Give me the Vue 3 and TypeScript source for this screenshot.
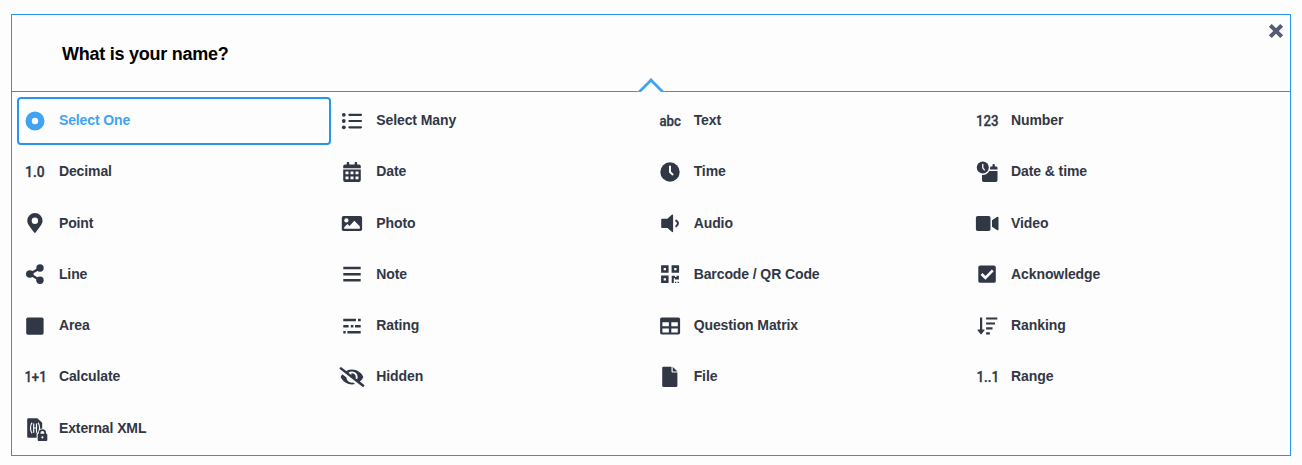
<script setup lang="ts">
interface QuestionType {
  id: string
  label: string
  glyph?: { text: string; x: number; width: number }
}

const question = 'What is your name?'
const selected = 'select_one'

const types: QuestionType[] = [
  { id: 'select_one', label: 'Select One' },
  { id: 'select_many', label: 'Select Many' },
  { id: 'text', label: 'Text', glyph: { text: 'abc', x: 4.4, width: 21.4 } },
  { id: 'number', label: 'Number', glyph: { text: '123', x: 3.9, width: 22.6 } },
  { id: 'decimal', label: 'Decimal', glyph: { text: '1.0', x: 5, width: 19.6 } },
  { id: 'date', label: 'Date' },
  { id: 'time', label: 'Time' },
  { id: 'datetime', label: 'Date & time' },
  { id: 'point', label: 'Point' },
  { id: 'photo', label: 'Photo' },
  { id: 'audio', label: 'Audio' },
  { id: 'video', label: 'Video' },
  { id: 'line', label: 'Line' },
  { id: 'note', label: 'Note' },
  { id: 'barcode', label: 'Barcode / QR Code' },
  { id: 'acknowledge', label: 'Acknowledge' },
  { id: 'area', label: 'Area' },
  { id: 'rating', label: 'Rating' },
  { id: 'matrix', label: 'Question Matrix' },
  { id: 'ranking', label: 'Ranking' },
  { id: 'calculate', label: 'Calculate', glyph: { text: '1+1', x: 4.4, width: 22.2 } },
  { id: 'hidden', label: 'Hidden' },
  { id: 'file', label: 'File' },
  { id: 'range', label: 'Range', glyph: { text: '1..1', x: 4.4, width: 22.8 } },
  { id: 'xml', label: 'External XML' },
]
</script>

<template>
  <section class="panel">
    <header class="head">
      <h1>{{ question }}</h1>
      <button class="close" aria-label="Close">
        <svg viewBox="0 0 16 16" width="16" height="16"><path d="M2.3 2.3L13.7 13.7M13.7 2.3L2.3 13.7" /></svg>
      </button>
      <span class="arrow"></span>
    </header>
    <div class="grid">
      <button v-for="t in types" :key="t.id" class="cell" :class="{ active: t.id === selected }">
        <svg class="icon" viewBox="0 0 30 30" width="30" height="30">
          <text v-if="t.glyph" :x="t.glyph.x" y="20" :textLength="t.glyph.width" lengthAdjust="spacingAndGlyphs">{{ t.glyph.text }}</text>
          <path v-else-if="t.id === 'select_one'" fill-rule="evenodd" d="M15 5.5a9.5 9.5 0 1 0 0 19a9.5 9.5 0 1 0 0-19zM15 11.8a3.2 3.2 0 1 1 0 6.4a3.2 3.2 0 1 1 0-6.4z" />
          <g v-else-if="t.id === 'select_many'">
            <circle cx="6.8" cy="8.8" r="1.9" /><circle cx="6.8" cy="15" r="1.9" /><circle cx="6.8" cy="21.3" r="1.9" />
            <path class="s" stroke-width="2.2" stroke-linecap="round" d="M12.4 8.8H24M12.4 15H24M12.4 21.3H24" />
          </g>
          <g v-else-if="t.id === 'date'">
            <path fill-rule="evenodd" d="M6.2 12.4H23.8V23a1.9 1.9 0 0 1-1.9 1.9H8.1A1.9 1.9 0 0 1 6.2 23zM8.5 14.6v2.6h3v-2.6zM13.5 14.6v2.6h3v-2.6zM18.5 14.6v2.6h3v-2.6zM8.5 19.6v2.6h3v-2.6zM13.5 19.6v2.6h3v-2.6zM18.5 19.6v2.6h3v-2.6z" />
            <path d="M6.2 11.2V9.3a1.9 1.9 0 0 1 1.9-1.9H9.8V5.6q0-.6.6-.6h1.2q.6 0 .6.6v1.8h5.5V5.6q0-.6.6-.6h1.2q.6 0 .6.6v1.8h1.8a1.9 1.9 0 0 1 1.9 1.9v1.9z" />
          </g>
          <g v-else-if="t.id === 'time'">
            <circle cx="15" cy="15" r="9.7" />
            <path class="w" stroke-width="2" stroke-linecap="round" stroke-linejoin="round" d="M15 9.4V15L17.6 17.4" />
          </g>
          <g v-else-if="t.id === 'datetime'">
            <path d="M10 14H25.5V23.2a1.7 1.7 0 0 1-1.7 1.7H11.7A1.7 1.7 0 0 1 10 23.2zM17.8 12.6V11q0-1.4 1.4-1.4h1.3V8q0-.9.9-.9h.5q.9 0 .9.9v1.6h1.3q1.4 0 1.4 1.4v1.6z" />
            <circle class="bg" cx="10.8" cy="10.5" r="7.4" />
            <circle cx="10.8" cy="10.5" r="6" />
            <path class="w" stroke-width="1.3" stroke-linecap="round" stroke-linejoin="round" d="M10.8 7.3V10.9L12.4 12.8" />
          </g>
          <path v-else-if="t.id === 'point'" fill-rule="evenodd" d="M14.2 24.6C8.6 16.8 7.3 15.8 7.3 12.7a7.6 7.6 0 0 1 15.2 0C22.5 15.8 21.2 16.8 15.6 24.6q-.7.8-1.4 0zM14.9 9.6a3.2 3.2 0 1 0 0 6.4a3.2 3.2 0 1 0 0-6.4z" />
          <g v-else-if="t.id === 'photo'">
            <rect x="4.8" y="8" width="20.3" height="15" rx="1.8" />
            <circle class="bg" cx="9.4" cy="12.4" r="2.1" />
            <path class="bg" d="M7.2 20.7V19.2L10.4 16L12.6 18L17.3 12.8L22.8 18.2V20.7z" />
          </g>
          <g v-else-if="t.id === 'audio'">
            <path d="M6.2 11.8q0-1 1-1H12.4L16.8 6.8q1.3-1 1.3.6V23.2q0 1.6-1.3.6L12.4 19.9H7.2q-1 0-1-1z" />
            <path class="s" stroke-width="2" stroke-linecap="round" d="M21.2 12.6Q24.8 15.3 21.2 18.2" />
          </g>
          <path v-else-if="t.id === 'video'" d="M5.7 8H16.7a1.8 1.8 0 0 1 1.8 1.8V21.2a1.8 1.8 0 0 1-1.8 1.8H5.7a1.8 1.8 0 0 1-1.8-1.8V9.8A1.8 1.8 0 0 1 5.7 8zM20 12.3L24.9 8.9q1.6-.8 1.6.9V21.2q0 1.7-1.6.9L20 18.7z" />
          <g v-else-if="t.id === 'line'">
            <path class="s" stroke-width="2.4" d="M20 9.1L9.8 15L20 21.3" />
            <circle cx="9.8" cy="15" r="3.8" /><circle cx="20" cy="9" r="3.7" /><circle cx="20" cy="21.2" r="3.7" />
          </g>
          <path v-else-if="t.id === 'note'" d="M6.3 7.8H23.7V10.3H6.3zM6.3 13.9H23.7V16.4H6.3zM6.3 20.1H23.7V22.6H6.3z" />
          <g v-else-if="t.id === 'barcode'">
            <path class="s" stroke-width="2.6" d="M7.4 7.6H12.3V12.5H7.4zM17.9 7.6H22.8V12.5H17.9zM7.4 17.9H12.3V22.8H7.4z" />
            <path d="M16.7 16.8H20V18H21.5V16.8H23.9V20.4H20V19.3H18.8V23.9H16.7zM20 22.7H21.3V23.9H20zM22.6 22.7H23.9V23.9H22.6z" />
          </g>
          <g v-else-if="t.id === 'acknowledge'">
            <rect x="6.3" y="6.6" width="17.5" height="17.2" rx="1.9" />
            <path class="w" stroke-width="2.6" d="M9.5 15L13.4 18.8L20.8 11.4" />
          </g>
          <rect v-else-if="t.id === 'area'" x="6.2" y="6.5" width="17.4" height="17.2" rx="1.7" />
          <path v-else-if="t.id === 'rating'" d="M6.3 7.8H19V10.2H6.3zM21 7.8H23.7V10.2H21zM6.3 13.9H11.6V16.4H6.3zM13.8 13.9H16.4V16.4H13.8zM18 13.9H23.7V16.4H18zM6.3 20.1H8.7V22.5H6.3zM10.4 20.1H23.7V22.5H10.4z" />
          <path v-else-if="t.id === 'matrix'" fill-rule="evenodd" d="M6.9 6.5H23.3a1.8 1.8 0 0 1 1.8 1.8V21.8a1.8 1.8 0 0 1-1.8 1.8H6.9a1.8 1.8 0 0 1-1.8-1.8V8.3A1.8 1.8 0 0 1 6.9 6.5zM7.4 11.2V15.2H13.9V11.2zM16.3 11.2V15.2H22.8V11.2zM7.4 17.4V21.4H13.9V17.4zM16.3 17.4V21.4H22.8V17.4z" />
          <g v-else-if="t.id === 'ranking'">
            <path d="M8 6.6H10.2V18.4H12.2q.9 0 .3.8L9.7 22.9q-.6.6-1.2 0L5.6 19.2q-.6-.8.3-.8H8z" />
            <path d="M14.1 6.4H25.3V8.5H14.1zM14.1 11.4H23V13.5H14.1zM14.1 16.3H20.5V18.4H14.1zM14.1 21.3H17.9V23.4H14.1z" />
          </g>
          <path v-else-if="t.id === 'hidden'" transform="translate(2.5 5) scale(.0391)" d="M320 400c-75.85 0-137.25-58.71-142.9-133.11L72.2 185.82c-13.79 17.3-26.48 35.59-36.72 55.59a32.35 32.35 0 0 0 0 29.19C89.71 376.41 197.07 448 320 448c26.91 0 52.87-4 77.89-10.46L346 397.39a144.13 144.13 0 0 1-26 2.61zm313.82 58.1l-110.55-85.44a331.25 331.25 0 0 0 81.25-102.07 32.35 32.35 0 0 0 0-29.19C550.29 135.59 442.93 64 320 64a308.15 308.15 0 0 0-147.32 37.7L45.46 3.37A16 16 0 0 0 23 6.18L3.37 31.45A16 16 0 0 0 6.18 53.9l588.36 454.73a16 16 0 0 0 22.46-2.81l19.64-25.27a16 16 0 0 0-2.82-22.45zm-183.72-142l-39.3-30.38A94.75 94.75 0 0 0 416 256a94.76 94.76 0 0 0-121.31-92.21A47.65 47.65 0 0 1 304 192a46.64 46.64 0 0 1-1.54 10l-73.61-56.89A142.31 142.31 0 0 1 320 112a143.92 143.92 0 0 1 144 144c0 21.63-5.29 41.79-13.9 60.11z" />
          <path v-else-if="t.id === 'file'" d="M8.3 4.8H16.5V9.5q0 1 1 1H22.4V23.8q0 1.1-1.1 1.1H8.3q-1.1 0-1.1-1.1V5.9q0-1.1 1.1-1.1zM17.7 4.8L22.4 9.4H17.7z" />
          <g v-else-if="t.id === 'xml'">
            <path d="M8.5 5.2H17.3L22.2 9.8V24.8H8.5Q7.2 24.8 7.2 23.5V6.5Q7.2 5.2 8.5 5.2z" />
            <path class="w" stroke-width="1.2" d="M12.1 9.8Q10.5 11.2 10.5 15T12.1 20.2M18 9.8Q19.6 11.2 19.6 15T18 20.2M13.7 10.4V19.8M16.5 10.4V19.8M13.7 15H16.5" />
            <path class="bg" d="M16.6 25.6V20.4L18.4 19Q18.6 15.6 22.4 15.4T26.2 19L28.5 20.4V28.5H16.6z" />
            <path class="s" stroke-width="1.7" d="M19.6 21.5V20a2.8 2.8 0 0 1 5.6 0V21.5" />
            <path fill-rule="evenodd" d="M18.6 20.8H26.4q.9 0 .9.9V27q0 .9-.9.9H18.6q-.9 0-.9-.9V21.7q0-.9.9-.9zM22.4 23.2a1.1 1.1 0 1 0 0 2.2a1.1 1.1 0 1 0 0-2.2z" />
          </g>
        </svg>
        <span class="label">{{ t.label }}</span>
      </button>
    </div>
  </section>
</template>

<style>
body {
  background: #fdfdfd;
}
</style>

<style scoped>
.panel {
  box-sizing: border-box;
  width: 1280px;
  height: 442px;
  margin: 14px 0 0 11px;
  border: 1px solid #2795ee;
  background: #fdfdfd;
  font-family: 'Liberation Sans', Arial, sans-serif;
}
.head {
  position: relative;
  box-sizing: border-box;
  display: flex;
  align-items: center;
  height: 77px;
  padding: 2px 0 0 50px;
  border-bottom: 1px solid #2795ee;
}
h1 {
  margin: 0;
  color: #000;
  font-size: 18px;
  font-weight: 700;
  letter-spacing: -0.25px;
  line-height: 24px;
  white-space: nowrap;
}
.close {
  position: absolute;
  top: 8px;
  right: 6px;
  width: 16px;
  height: 16px;
  padding: 0;
  border: 0;
  background: none;
}
.close svg {
  display: block;
}
.close path {
  fill: none;
  stroke: #545b75;
  stroke-width: 4;
}
.arrow {
  position: absolute;
  left: 629px;
  bottom: -11px;
  box-sizing: border-box;
  width: 20px;
  height: 20px;
  border: solid #40a4f2;
  border-width: 3px 0 0 3px;
  background: #fdfdfd;
  transform: rotate(45deg);
  clip-path: polygon(0 0, 100% 0, 0 100%);
}
.grid {
  display: grid;
  grid-template-columns: repeat(4, 314px);
  grid-auto-rows: 48px;
  gap: 3.25px 3.4px;
  padding: 5px 0 0 5px;
}
.cell {
  box-sizing: border-box;
  display: flex;
  align-items: center;
  gap: 8.9px;
  padding: 0 0 1px 1px;
  border: 2px solid transparent;
  border-radius: 4px;
  background: none;
  color: #313745;
  font: 700 14px/20px 'Liberation Sans', Arial, sans-serif;
  letter-spacing: -0.1px;
  text-align: left;
}
.cell.active {
  border-color: #2795ee;
  color: #40a4f2;
}
.icon {
  flex: none;
  fill: currentColor;
}
.icon text {
  font: 500 15px Roboto, sans-serif;
  letter-spacing: 0;
  stroke: currentColor;
  stroke-width: 0.3px;
}
.s {
  fill: none;
  stroke: currentColor;
}
.w {
  fill: none;
  stroke: #fdfdfd;
}
.bg {
  fill: #fdfdfd;
}
.label {
  margin-top: -1px;
  white-space: nowrap;
}
</style>
